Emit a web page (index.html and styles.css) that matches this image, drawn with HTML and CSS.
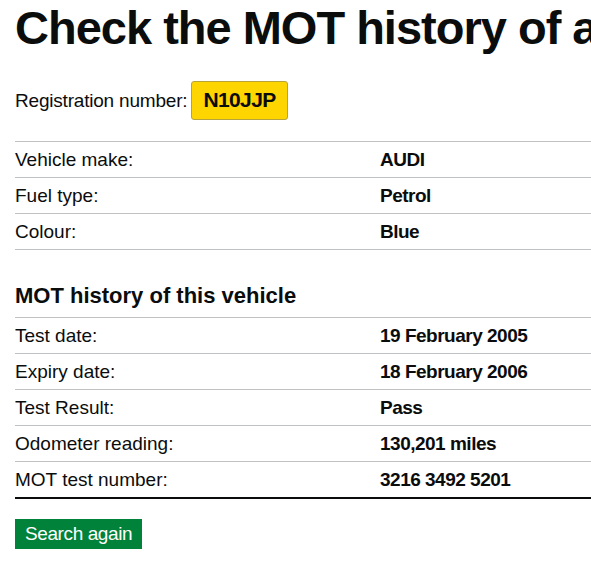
FILE: index.html
```html
<!DOCTYPE html>
<html lang="en">
<head>
  <meta charset="UTF-8">
  <meta name="viewport" content="width=device-width, initial-scale=1.0">
  <title>Check the MOT history of a vehicle</title>
  <link rel="stylesheet" href="styles.css">
</head>
<body>

  <main class="page">
    <h1 class="heading-xlarge">Check the MOT history of a vehicle</h1>

    <p class="reg">
      Registration number:
      <span class="reg-mark">N10JJP</span>
    </p>

    <dl class="details first">
      <div class="row">
        <dt>Vehicle make:</dt>
        <dd>AUDI</dd>
      </div>
      <div class="row">
        <dt>Fuel type:</dt>
        <dd>Petrol</dd>
      </div>
      <div class="row">
        <dt>Colour:</dt>
        <dd>Blue</dd>
      </div>
    </dl>

    <h2 class="heading-medium">MOT history of this vehicle</h2>

    <dl class="details history">
      <div class="row">
        <dt>Test date:</dt>
        <dd>19 February 2005</dd>
      </div>
      <div class="row">
        <dt>Expiry date:</dt>
        <dd>18 February 2006</dd>
      </div>
      <div class="row">
        <dt>Test Result:</dt>
        <dd>Pass</dd>
      </div>
      <div class="row">
        <dt>Odometer reading:</dt>
        <dd>130,201 miles</dd>
      </div>
      <div class="row">
        <dt>MOT test number:</dt>
        <dd>3216 3492 5201</dd>
      </div>
    </dl>

    <a href="#" class="button">Search again</a>
  </main>

</body>
</html>
```

FILE: styles.css
```css
html, body {
  margin: 0;
  overflow: hidden;
}

body {
  font-family: 'Liberation Sans', Arial, sans-serif;
  color: #0b0c0c;
  background: #fff;
}

.page {
  padding: 0 0 0 15px;
}

.heading-xlarge {
  font-size: 47px;
  line-height: 52px;
  font-weight: bold;
  letter-spacing: -1px;
  white-space: nowrap;
  margin: 2px 0 0;
}

.reg {
  display: flex;
  align-items: center;
  gap: 4px;
  font-size: 19px;
  letter-spacing: -0.2px;
  margin: 27px 0 0;
}

.reg-mark {
  display: inline-block;
  background: #ffd500;
  border: 1px solid #b6a33b;
  border-radius: 3px;
  padding: 6px 11px 7px;
  font-size: 21px;
  line-height: 24px;
  font-weight: bold;
  letter-spacing: -0.6px;
}

.details {
  margin: 21px 0 0;
  border-top: 1px solid #bfc1c3;
  font-size: 19px;
}

.row {
  display: grid;
  grid-template-columns: 365px 1fr;
  align-items: center;
  height: 35px;
  border-bottom: 1px solid #bfc1c3;
}

.row dt, .row dd {
  margin: 0;
}

.row dd {
  font-weight: bold;
  letter-spacing: -0.5px;
}

.history {
  margin-top: 8px;
}

.history .row:last-child {
  border-bottom: 2px solid #0b0c0c;
}

.heading-medium {
  font-size: 22px;
  line-height: 26px;
  font-weight: bold;
  margin: 33px 0 0;
}

.button {
  display: inline-block;
  margin-top: 20px;
  background: #00823b;
  color: #fff;
  text-decoration: none;
  font-size: 19px;
  line-height: 22px;
  letter-spacing: -0.4px;
  padding: 4px 10px 4px;
  box-shadow: 0 2px 0 #003618;
}
```
